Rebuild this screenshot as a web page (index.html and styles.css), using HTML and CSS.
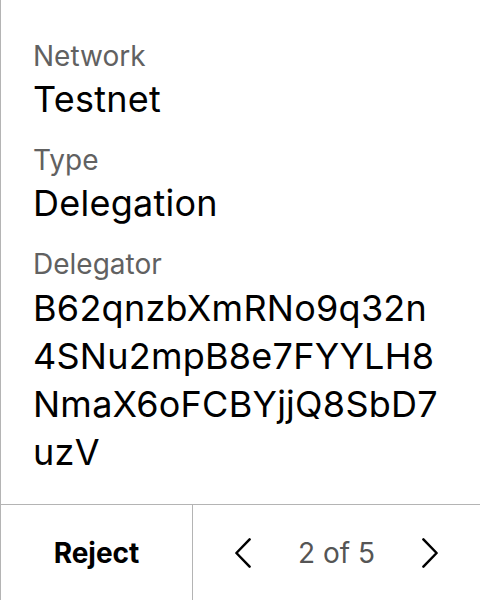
FILE: index.html
```html
<!DOCTYPE html>
<html>
<head>
<meta charset="utf-8">
<link rel="stylesheet" href="styles.css">
</head>
<body>
<div class="screen">
  <div class="content">
    <div class="field">
      <div class="label">Network</div>
      <div class="value">Testnet</div>
    </div>
    <div class="field">
      <div class="label">Type</div>
      <div class="value">Delegation</div>
    </div>
    <div class="field">
      <div class="label">Delegator</div>
      <div class="value address">B62qnzbXmRNo9q32n<br>4SNu2mpB8e7FYYLH8<br>NmaX6oFCBYjjQ8SbD7<br>uzV</div>
    </div>
  </div>
  <div class="footer">
    <div class="reject">Reject</div>
    <div class="pager">
      <svg class="chev" width="16" height="30" viewBox="0 0 16 30"><path d="M14.6 1.4 L1.4 15 L14.6 28.6" fill="none" stroke="#000" stroke-width="2.5" stroke-linecap="round" stroke-linejoin="round"/></svg>
      <span class="count">2 of 5</span>
      <svg class="chev" width="16" height="30" viewBox="0 0 16 30"><path d="M1.4 1.4 L14.6 15 L1.4 28.6" fill="none" stroke="#000" stroke-width="2.5" stroke-linecap="round" stroke-linejoin="round"/></svg>
    </div>
  </div>
</div>
</body>
</html>
```
FILE: styles.css
```css
html, body { margin: 0; padding: 0; background: #fff; }
body { font-family: Inter, "Noto Sans", sans-serif; color: #000; }
.screen {
  width: 480px; height: 600px; box-sizing: border-box;
  border-left: 1px solid #b4b4b4;
  display: flex; flex-direction: column;
}
.content { flex: 1; padding: 38px 0 0 32px; display: flex; flex-direction: column; gap: 19px; }
.label { font-size: 28px; color: #616161; line-height: 36px; }
.value { font-size: 36px; line-height: 48px; margin-top: 1px; letter-spacing: 0.25px; }
.address { margin-top: 2px; }
.footer {
  height: 96px; box-sizing: border-box; border-top: 1px solid #b4b4b4;
  display: flex;
}
.reject {
  width: 191px; border-right: 1px solid #b4b4b4;
  display: flex; align-items: center; justify-content: center;
  font-size: 28px; font-weight: 700;
}
.pager { flex: 1; display: flex; align-items: center; justify-content: space-between; padding: 0 42px; }
.chev { display: block; }
.count { font-size: 28px; color: #555; }
```
